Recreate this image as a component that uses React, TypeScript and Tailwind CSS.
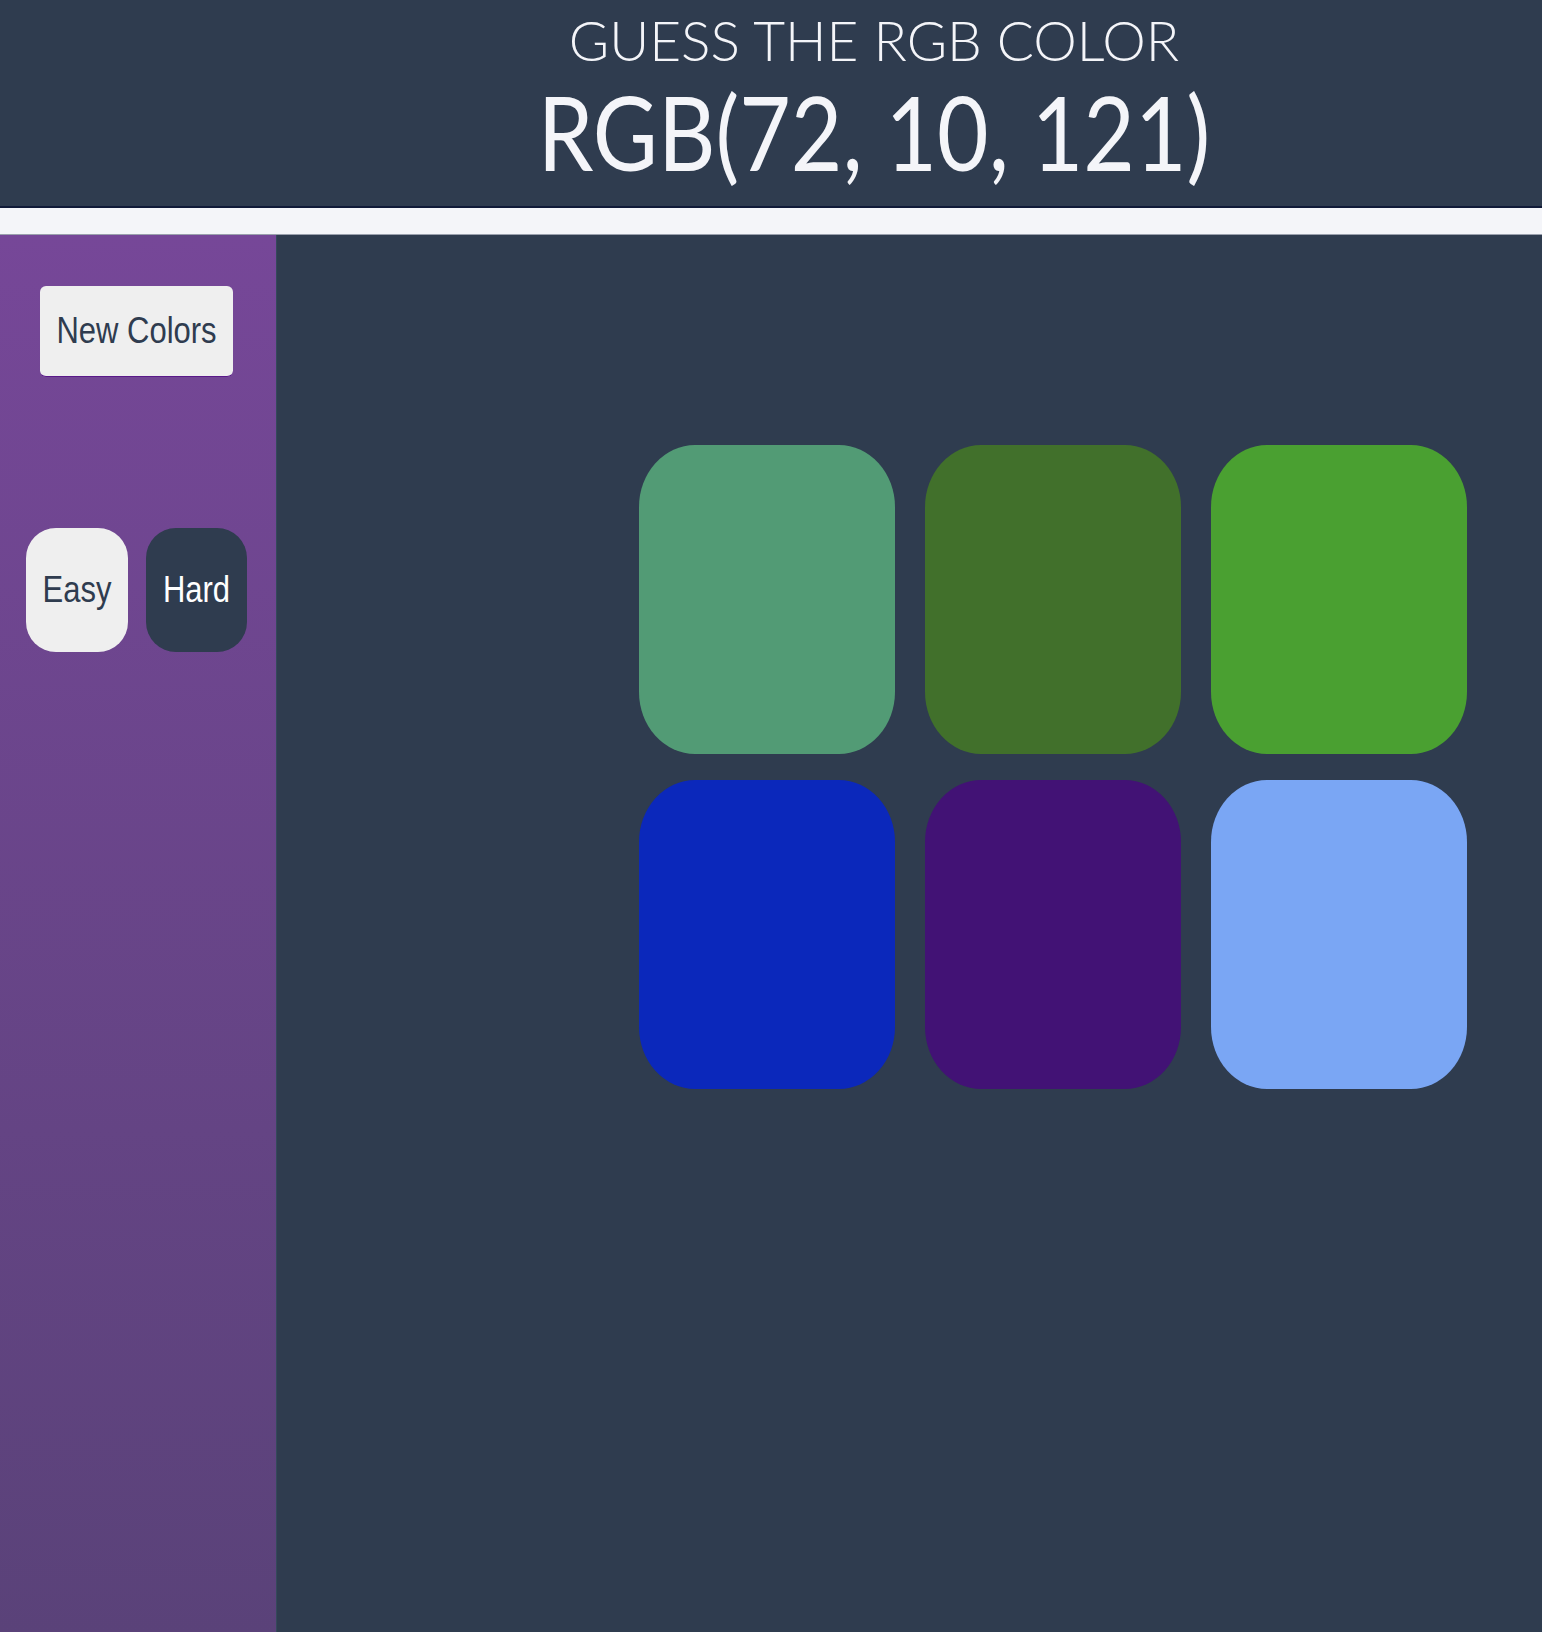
import React from "react";

const TILES = [
  "#529b75",
  "#41702b",
  "#4aa031",
  "#0b28bb",
  "#421275",
  "#7aa6f4",
];

const App = () => {
  return (
    <div className="flex min-h-screen flex-col bg-[#2f3c4f]">
      {/* Header */}
      <header className="flex h-[208px] flex-col items-center border-b-2 border-[#101a38] bg-[#2f3c4f] pl-[206px] font-['Lato',sans-serif] text-[#f4f5f9]">
        <h1 className="mt-[13px] whitespace-nowrap text-[55px] font-light leading-[55px]">
          GUESS THE RGB COLOR
        </h1>
        <h2 className="mt-[24px] origin-[50%_79px] scale-y-[1.15] whitespace-nowrap text-[89px] font-normal leading-[89px]">
          RGB(72, 10, 121)
        </h2>
      </header>

      {/* Bar */}
      <div className="h-[27px] border-b border-[#9aa0ad] bg-[#f4f5f9]"></div>

      <div className="flex flex-1">
        {/* Sidebar */}
        <aside className="flex w-[276px] flex-col items-start bg-gradient-to-b from-[#764798] to-[#5a4279] font-['Liberation_Sans',Arial,sans-serif]">
          <button className="ml-[40px] mt-[51px] h-[91px] w-[193px] rounded-md border-b border-[#5a1a8a] bg-[#efefef] text-[31px] text-[#2f3c4f]">
            <span className="inline-block scale-y-[1.2]">New Colors</span>
          </button>
          <div className="ml-[26px] mt-[151px] flex gap-[18px]">
            <button className="h-[124px] w-[102px] rounded-[30px] bg-[#efefef] text-[31px] text-[#2f3c4f]">
              <span className="inline-block scale-y-[1.2]">Easy</span>
            </button>
            <button className="h-[124px] w-[101px] rounded-[30px] bg-[#2f3c4f] text-[31px] text-white">
              <span className="inline-block scale-y-[1.2]">Hard</span>
            </button>
          </div>
        </aside>

        {/* Tiles */}
        <main className="flex-1 border-l border-[#34495a] bg-[#2f3c4f] pl-[362px] pt-[210px]">
          <div className="grid w-[828px] grid-cols-3 gap-x-[30px] gap-y-[26px]">
            {TILES.map((c) => (
              <div
                key={c}
                className="h-[309px] w-[256px] rounded-[56px/62px]"
                style={{ backgroundColor: c }}
              ></div>
            ))}
          </div>
        </main>
      </div>
    </div>
  );
};

export default App;
